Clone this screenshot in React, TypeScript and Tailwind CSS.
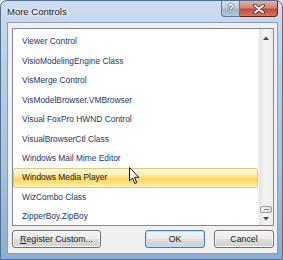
import type { ReactNode } from 'react'

const ITEMS = [
  'Viewer Control',
  'VisioModelingEngine Class',
  'VisMerge Control',
  'VisModelBrowser.VMBrowser',
  'Visual FoxPro HWND Control',
  'VisualBrowserCtl Class',
  'Windows Mail Mime Editor',
  'Windows Media Player',
  'WizCombo Class',
  'ZipperBoy.ZipBoy',
]

const SELECTED = 'Windows Media Player'

function DialogButton({ children, primary, className }: { children: ReactNode; primary?: boolean; className?: string }) {
  return (
    <button
      type="button"
      className={
        'h-[18px] rounded-[3px] border text-[8.8px] leading-none text-[#1b1b1b] bg-[linear-gradient(to_bottom,#f4f4f4_0%,#ececec_48%,#dddddd_52%,#d0d0d0_100%)] ' +
        (primary
          ? 'border-[#3c7fb1] shadow-[inset_0_0_0_1px_#b6e1f7] '
          : 'border-[#707070] shadow-[inset_0_0_0_1px_#fbfbfb] ') +
        (className ?? '')
      }
    >
      {children}
    </button>
  )
}

function Scrollbar() {
  return (
    <div className="w-[15px] flex flex-col border-l border-[#f7f7f7] bg-[linear-gradient(to_right,#e4e4e4,#f3f3f3_40%,#eeeeee)]">
      <div className="h-[17px] flex items-center justify-center">
        <svg width="6" height="4" viewBox="0 0 6 4">
          <path d="M0 4 L3 0.5 L6 4 Z" fill="#4a4a4a" />
        </svg>
      </div>
      <div className="flex-1" />
      <div className="h-[7px] mx-[1px] rounded-[2px] border border-[#9a9a9a] bg-[linear-gradient(to_right,#f4f4f4,#dcdcdc)] flex flex-col justify-center items-center">
        <div className="w-[5px] h-[1px] bg-[#8a8a8a]" />
      </div>
      <div className="h-[12px] flex items-center justify-center">
        <svg width="6" height="4" viewBox="0 0 6 4">
          <path d="M0 0 L6 0 L3 3.5 Z" fill="#4a4a4a" />
        </svg>
      </div>
    </div>
  )
}

export default function App() {
  return (
    <div className="w-[283px] h-[260px] overflow-hidden bg-[#dfe7f0] font-['Liberation_Sans',Arial,sans-serif]">
      <div className="relative h-[260px] w-[283px] rounded-t-[7px] border border-[#54708f] bg-[linear-gradient(to_bottom,#cddcee_0%,#b9cee6_25%,#a7c1de_65%,#88acd5_100%)] flex flex-col">
        {/* title bar */}
        <div className="h-[21px] flex items-start justify-between">
          <span className="pl-[6px] pt-[5px] text-[9.5px] leading-[12px] text-[#1a1a1a] [text-shadow:0_0_5px_#ffffff,0_0_3px_#ffffff]">
            More Controls
          </span>
          <div className="flex mr-[4px]">
            <div className="w-[19px] h-[16px] rounded-bl-[4px] border border-t-0 border-[#5d7797] bg-[linear-gradient(to_bottom,#d6e1ee_0%,#bccde2_45%,#9fb5d0_55%,#b3c6dd_100%)] flex items-center justify-center">
              <span className="text-[10px] font-bold leading-none text-white [text-shadow:0_0_1px_#2a3f5c,0_0_2px_#2a3f5c]">?</span>
            </div>
            <div className="w-[38px] h-[16px] rounded-br-[4px] border border-l-0 border-t-0 border-[#5e2522] bg-[linear-gradient(to_bottom,#eab0a3_0%,#d98170_45%,#c34a3c_55%,#d77463_100%)] flex items-center justify-center">
              <svg width="12" height="10" viewBox="0 0 12 10">
                <path d="M2 1.5 L10 8.5 M10 1.5 L2 8.5" stroke="#4b1a16" strokeWidth="3.6" strokeLinecap="round" />
                <path d="M2 1.5 L10 8.5 M10 1.5 L2 8.5" stroke="#ffffff" strokeWidth="2" strokeLinecap="round" />
              </svg>
            </div>
          </div>
        </div>

        {/* client area */}
        <div className="ml-[6px] mr-[4px] h-[232px] border border-[#8a9db6] bg-[#f0f0f0] flex flex-col pt-[5px] pl-[4px] pr-[3px] pb-[5px]">
          <div className="h-[198px] border border-[#828790] bg-white flex overflow-hidden">
            <div className="flex-1 pt-[3px] overflow-hidden">
              {ITEMS.map(item => {
                const sel = item === SELECTED
                return (
                  <div
                    key={item}
                    className={
                      'h-[19.45px] flex items-center pl-[8px] border rounded-[2px] text-[8.4px] whitespace-nowrap ' +
                      (sel
                        ? 'border-[#e2c97a] bg-[linear-gradient(to_bottom,#fff8dc_0%,#ffefb4_30%,#ffd75e_55%,#ffe389_80%,#fff2c4_100%)] text-[#22200f]'
                        : 'border-transparent text-[#1d3668]')
                    }
                  >
                    {item}
                  </div>
                )
              })}
            </div>
            <Scrollbar />
          </div>

          <div className="mt-[4px] flex items-center">
            <DialogButton className="w-[89px]">
              <span className="underline underline-offset-[1px]">R</span>egister Custom...
            </DialogButton>
            <div className="ml-auto flex gap-[9px]">
              <DialogButton primary className="w-[60px]">OK</DialogButton>
              <DialogButton className="w-[60px]">Cancel</DialogButton>
            </div>
          </div>
        </div>

        {/* mouse pointer */}
        <svg className="absolute left-[128px] top-[166px]" width="11" height="18" viewBox="0 0 11 18">
          <path d="M0.5 0.5 L0.5 14 L3.6 11 L5.8 16.5 L7.8 15.7 L5.6 10.3 L9.8 10.3 Z" fill="#ffffff" stroke="#111111" strokeWidth="1" strokeLinejoin="round" />
        </svg>
      </div>
    </div>
  )
}
